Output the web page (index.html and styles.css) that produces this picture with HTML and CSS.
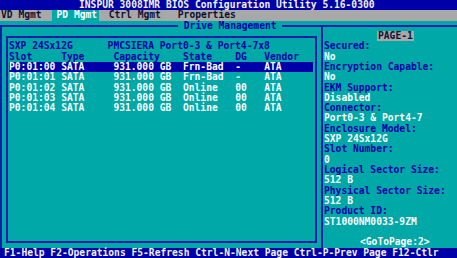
FILE: index.html
```html
<!DOCTYPE html>
<html lang="en">
<head>
    <meta charset="UTF-8">
    <title>INSPUR BIOS Configuration Utility</title>
    <link rel="stylesheet" href="styles.css">
</head>
<body>
    <div class="screen">
        <div class="title">INSPUR 3008IMR BIOS Configuration Utility 5.16-0300</div>

        <!-- top menu, PD Mgmt is the open tab -->
        <div class="menu">
            <span class="tab vd">VD Mgmt</span>
            <span class="tab pd active">PD Mgmt</span>
            <span class="tab ctrl">Ctrl Mgmt</span>
            <span class="tab props">Properties</span>
        </div>

        <div class="main">
            <div class="frame">
                <div class="frame-title">Drive Management</div>

                <div class="left">
                    <div class="box">
                        <div class="enclosure">
                            <span class="enc-name">SXP 24Sx12G</span>
                            <span>PMCSIERA Port0-3 &amp; Port4-7x8</span>
                        </div>
                        <div class="row head">
                            <span>Slot</span><span>Type</span><span>Capacity</span><span>State</span><span>DG</span><span>Vendor</span>
                        </div>
                        <div class="row sel">
                            <span>P0:01:00</span><span>SATA</span><span>931.000 GB</span><span>Frn-Bad</span><span>-</span><span>ATA</span>
                        </div>
                        <div class="row">
                            <span>P0:01:01</span><span>SATA</span><span>931.000 GB</span><span>Frn-Bad</span><span>-</span><span>ATA</span>
                        </div>
                        <div class="row">
                            <span>P0:01:02</span><span>SATA</span><span>931.000 GB</span><span>Online</span><span>00</span><span>ATA</span>
                        </div>
                        <div class="row">
                            <span>P0:01:03</span><span>SATA</span><span>931.000 GB</span><span>Online</span><span>00</span><span>ATA</span>
                        </div>
                        <div class="row">
                            <span>P0:01:04</span><span>SATA</span><span>931.000 GB</span><span>Online</span><span>00</span><span>ATA</span>
                        </div>
                    </div>
                </div>

                <div class="right">
                    <div class="page">PAGE-1</div>
                    <div class="label">Secured:</div>
                    <div class="value">No</div>
                    <div class="label">Encryption Capable:</div>
                    <div class="value">No</div>
                    <div class="label">EKM Support:</div>
                    <div class="value">Disabled</div>
                    <div class="label">Connector:</div>
                    <div class="value">Port0-3 &amp; Port4-7</div>
                    <div class="label">Enclosure Model:</div>
                    <div class="value">SXP 24Sx12G</div>
                    <div class="label">Slot Number:</div>
                    <div class="value">0</div>
                    <div class="label">Logical Sector Size:</div>
                    <div class="value">512 B</div>
                    <div class="label">Physical Sector Size:</div>
                    <div class="value">512 B</div>
                    <div class="label">Product ID:</div>
                    <div class="value">ST1000NM0033-9ZM</div>
                    <div class="goto">&lt;GoToPage:2&gt;</div>
                </div>
            </div>
        </div>

        <div class="status">F1-Help F2-Operations F5-Refresh Ctrl-N-Next Page Ctrl-P-Prev Page F12-Ctlr</div>
    </div>
</body>
</html>
```

FILE: styles.css
```css
/* text mode screen: one character cell is --col x --row */
:root {
    --col: 5.8px;
    --row: 10.32px;
    --teal: #00a8a8;
    --blue: #0000a8;
    --line: #0a1ea8;
    --grey: #a8a8a8;
    --white: #fcfcfc;
}

* {
    box-sizing: border-box;
}

body {
    margin: 0;
    background: var(--teal);
    font-family: "DejaVu Sans Mono", monospace;
    font-weight: bold;
    font-size: 9.63px; /* 0.602em advance -> 5.8px cell */
    line-height: var(--row);
    font-kerning: none;
    color: var(--white);
}

.screen {
    width: 457px;
    height: 258px;
    display: grid;
    grid-template-rows: var(--row) var(--row) 1fr var(--row);
    overflow: hidden;
}

.title {
    background: var(--blue);
    color: #f0f0f0;
    padding-left: 79px;
    white-space: pre;
}

.menu {
    background: var(--grey);
    color: #101030;
    display: flex;
}

.tab {
    white-space: pre;
}

.tab.vd {
    margin-left: 1px;
}

.tab.pd {
    margin-left: 10px;
    padding: 0 2px 0 5px;
}

.tab.ctrl {
    margin-left: 9.5px;
}

.tab.props {
    margin-left: 17px;
}

.tab.active {
    background: var(--teal);
    color: var(--white);
}

.main {
    display: flex;
    flex-direction: column;
    min-height: 0;
}

.frame {
    flex: 1;
    margin-top: 4px;
    border-top: 2px solid var(--line);
    border-left: 2px solid var(--line);
    display: flex;
    position: relative;
}

/* title sits on the top line of the frame */
.frame-title {
    position: absolute;
    top: -6px;
    left: 176px;
    padding: 0 var(--col);
    background: var(--teal);
    color: var(--blue);
}

.left {
    width: 319px;
    padding: 9px 4px 4.68px 4px;
    display: flex;
}

.box {
    flex: 1;
    border: 2px solid var(--line);
    padding-top: 3.64px;
}

.enclosure {
    display: flex;
    padding-left: 1px;
    color: var(--blue);
    white-space: pre;
}

.enc-name {
    width: calc(var(--col) * 17);
}

.row {
    display: grid;
    grid-template-columns:
        calc(var(--col) * 9) calc(var(--col) * 9) calc(var(--col) * 12)
        calc(var(--col) * 9) calc(var(--col) * 5) auto;
    padding-left: 1px;
    white-space: pre;
}

.row.head {
    color: var(--blue);
}

.row.sel {
    background: var(--blue);
    margin: 0 2px 0 1px;
    padding-left: 0;
}

.right {
    flex: 1;
    border-left: 2px solid var(--line);
    padding: 4.32px 0 0 1px;
    display: flex;
    flex-direction: column;
    white-space: pre;
}

.page {
    align-self: flex-start;
    margin-left: 53px;
    padding: 0 1px;
    background: var(--grey);
    color: #101030;
}

.label {
    color: var(--blue);
}

.goto {
    margin-top: auto;
    margin-left: 36px;
}

.status {
    background: var(--blue);
    color: #f0f0f0;
    padding-left: 4px;
    white-space: pre;
}
```
